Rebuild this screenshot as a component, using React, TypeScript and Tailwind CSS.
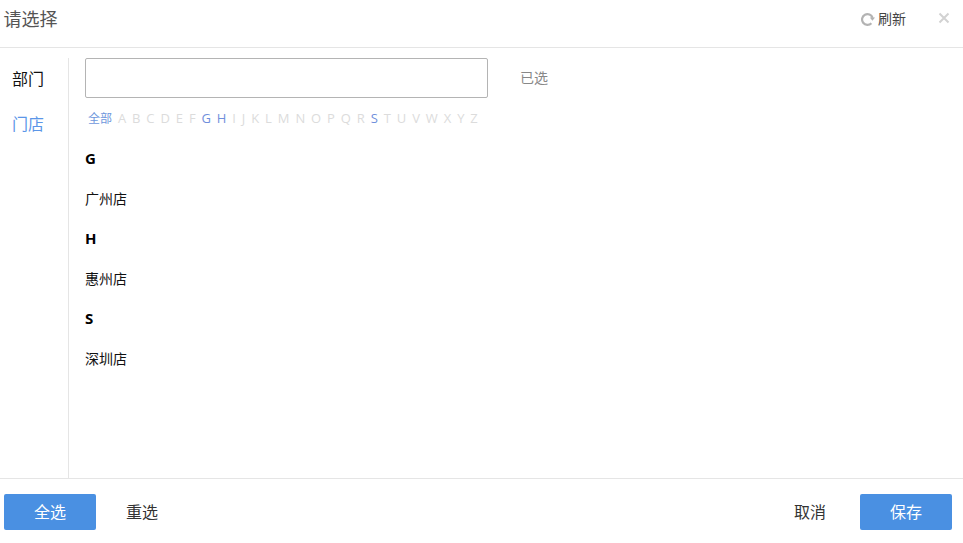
import React from 'react';

const LETTERS = 'ABCDEFGHIJKLMNOPQRSTUVWXYZ'.split('');
const ACTIVE = ['G', 'H', 'S'];
const GROUPS = [
    { letter: 'G', name: '广州店' },
    { letter: 'H', name: '惠州店' },
    { letter: 'S', name: '深圳店' },
];

export default function App() {
    return (
        <div className="h-[543px] w-[963px] overflow-hidden bg-white flex flex-col font-['Open_Sans','Noto_Sans_CJK_SC',sans-serif]">
            {/* Header */}
            <div className="h-[48px] shrink-0 border-b border-[#e5e5e5] flex items-center justify-between pl-[3.5px] pr-[13px] pb-[8px]">
                <span className="text-[18px] text-[#555]">请选择</span>
                <div className="flex items-center">
                    <svg className="w-[14px] h-[14px] mr-[3px] -mt-[2px]" viewBox="0 0 14 14" fill="none">
                        <path d="M10.4 11.2A5.4 5.4 0 1 1 11.6 5.8" stroke="#b3b3b3" strokeWidth="2.2" />
                        <path d="M8.8 5.4h5.2L11.4 8.8z" fill="#b3b3b3" />
                    </svg>
                    <span className="text-[14px] text-[#444] -mt-[2px]">刷新</span>
                    <svg className="w-[12px] h-[12px] ml-[32px] -mt-[4px]" viewBox="0 0 12 12" fill="none">
                        <path d="M1.5 1.5l9 9M10.5 1.5l-9 9" stroke="#d2d2d2" strokeWidth="2" />
                    </svg>
                </div>
            </div>

            {/* Body */}
            <div className="flex-1 min-h-0 flex pt-[10px]">
                <div className="w-[69px] shrink-0 border-r border-[#e5e5e5] flex flex-col items-center pr-[12px] pt-[10px] gap-[23px]">
                    <span className="text-[16px] leading-[22px] text-[#111]">部门</span>
                    <span className="text-[16px] leading-[22px] text-[#5b96e8]">门店</span>
                </div>
                <div className="flex-1 pl-[16px]">
                    <div className="flex items-center">
                        <input className="w-[403px] h-[40px] border border-[#b4b4b4] rounded-[2px] outline-none" />
                        <span className="ml-[32px] text-[14px] text-[#888] -mt-[2px]">已选</span>
                    </div>
                    <div className="flex items-center h-[20px] mt-[11px] pl-[3px] text-[13px] gap-[5.9px]">
                        <span className="text-[12px] text-[#6f97dc]">全部</span>
                        {LETTERS.map((l) => (
                            <span key={l} className={ACTIVE.includes(l) ? 'text-[#6f8fdc]' : 'text-[#dcdcdc]'}>
                                {l}
                            </span>
                        ))}
                    </div>
                    <div className="mt-[9px]">
                        {GROUPS.map((g) => (
                            <div key={g.letter}>
                                <div className="h-[40px] flex items-center text-[15px] font-bold text-black">{g.letter}</div>
                                <div className="h-[40px] flex items-center text-[14px] text-[#111]">{g.name}</div>
                            </div>
                        ))}
                    </div>
                </div>
            </div>

            {/* Footer */}
            <div className="h-[65px] shrink-0 border-t border-[#e5e5e5] flex items-center justify-between pl-[4px] pr-[11px] pt-[2px]">
                <div className="flex items-center">
                    <button className="w-[92px] h-[36px] rounded-[2px] bg-[#4a90e2] text-white text-[16px]">全选</button>
                    <button className="ml-[30px] text-[16px] text-[#333]">重选</button>
                </div>
                <div className="flex items-center">
                    <button className="mr-[34px] text-[16px] text-[#333]">取消</button>
                    <button className="w-[92px] h-[36px] rounded-[2px] bg-[#4a90e2] text-white text-[16px]">保存</button>
                </div>
            </div>
        </div>
    );
}
